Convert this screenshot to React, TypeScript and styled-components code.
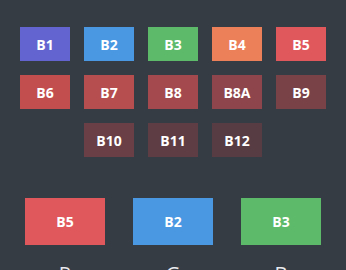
import React from "react";
import styled, { createGlobalStyle } from "styled-components";

const Global = createGlobalStyle`
  html, body { margin: 0; padding: 0; background: #363c44; }
  body { font-family: "Open Sans", "Liberation Sans", sans-serif; overflow: hidden; }
`;

const Page = styled.div`
  width: 346px;
  height: 270px;
  background: #363c44;
  display: flex;
  flex-direction: column;
  align-items: center;
  padding-top: 27px;
  box-sizing: border-box;
  overflow: hidden;
`;

const Swatches = styled.div`
  width: 306px;
  display: flex;
  flex-wrap: wrap;
  justify-content: center;
  gap: 14px;
`;

const Swatch = styled.div<{ $bg: string }>`
  width: 50px;
  height: 34px;
  background: ${(p) => p.$bg};
  color: #ffffff;
  font-weight: 700;
  font-size: 14px;
  display: flex;
  align-items: center;
  justify-content: center;
`;

const Channels = styled.div`
  margin-top: 41px;
  display: flex;
  gap: 28px;
`;

const Channel = styled.div`
  display: flex;
  flex-direction: column;
  align-items: center;
  gap: 15px;
`;

const BigSwatch = styled(Swatch)`
  width: 80px;
  height: 47px;
`;

const Label = styled.div`
  color: #e8eaee;
  font-size: 20px;
  font-weight: 400;
  line-height: 27px;
`;

const swatches: [string, string][] = [
  ["B1", "#6464d0"],
  ["B2", "#4a97e2"],
  ["B3", "#5cba6a"],
  ["B4", "#ec8058"],
  ["B5", "#e0585c"],
  ["B6", "#c24e4e"],
  ["B7", "#b64d4e"],
  ["B8", "#a44a4e"],
  ["B8A", "#8e464c"],
  ["B9", "#784247"],
  ["B10", "#6a3f45"],
  ["B11", "#5e3d44"],
  ["B12", "#583c43"],
];

const channels: [string, string, string][] = [
  ["B5", "#e0585c", "R"],
  ["B2", "#4a97e2", "G"],
  ["B3", "#5cba6a", "B"],
];

export default function App() {
  return (
    <>
      <Global />
      <Page>
        <Swatches>
          {swatches.map(([name, bg]) => (
            <Swatch key={name} $bg={bg}>
              {name}
            </Swatch>
          ))}
        </Swatches>
        <Channels>
          {channels.map(([name, bg, label]) => (
            <Channel key={label}>
              <BigSwatch $bg={bg}>{name}</BigSwatch>
              <Label>{label}</Label>
            </Channel>
          ))}
        </Channels>
      </Page>
    </>
  );
}
